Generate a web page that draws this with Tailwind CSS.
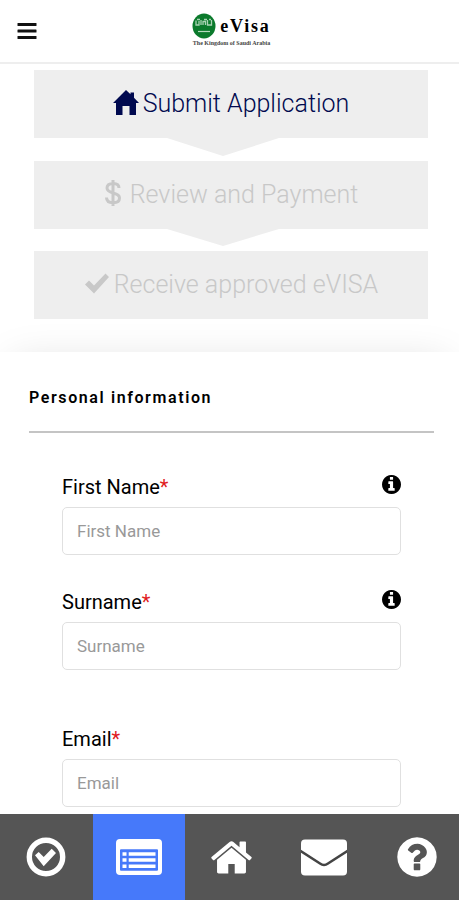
<!DOCTYPE html>
<html lang="en">

<head>
    <meta charset="UTF-8">
    <meta name="viewport" content="width=device-width, initial-scale=1.0">
    <title>eVisa - Submit Application</title>
    <script src="https://cdn.jsdelivr.net/npm/@tailwindcss/browser@4"></script>
</head>

<body class="min-h-screen bg-white font-[Roboto,sans-serif] text-black overflow-x-hidden">
    <!-- Header -->
    <header class="relative flex h-16 items-center justify-center border-b-2 border-[#eeeeee] bg-white">
        <button type="button" aria-label="Menu" class="absolute left-[17px] top-[22px]">
            <svg class="h-[18px] w-5" viewBox="0 0 20 18" fill="#111">
                <rect x="0.5" y="1" width="19" height="3" rx="0.5" />
                <rect x="0.5" y="7.5" width="19" height="3" rx="0.5" />
                <rect x="0.5" y="14" width="19" height="3" rx="0.5" />
            </svg>
        </button>
        <a href="#" class="flex flex-col items-center pb-0.5 pl-1 font-['Liberation_Serif',serif]">
            <span class="flex items-center gap-1">
                <svg class="h-[26px] w-6" viewBox="0 0 24 26">
                    <ellipse cx="12" cy="13" rx="11.5" ry="12.5" fill="#0b7a2c" />
                    <path d="M4 7.5v4.500h3V8m2 4V7m2 5V8.500h2.500V12m2-5v5h4V7M5 6.500h3m4 0h3m2 0h2" fill="none" stroke="#a9d3b3" stroke-width="1.300" />
                    <path d="M6 18.500h12" stroke="#b5dabd" stroke-width="1.200" />
                </svg>
                <span class="text-[18px] leading-6 font-bold tracking-widest">eVisa</span>
            </span>
            <span class="text-[6px] leading-2 font-bold text-[#444]">The Kingdom of Saudi Arabia</span>
        </a>
    </header>

    <!-- Progress steps -->
    <ol class="flex flex-col px-[34px] pt-[6px] pr-[31px] text-[25px] leading-8 font-light text-[#c8c8c8]">
        <li>
            <div class="flex h-[68px] items-center justify-center gap-1 bg-[#eeeeee] text-[#00094f]">
                <svg class="mb-1 h-[25px] w-[26px]" viewBox="0 0 26 25" fill="currentColor">
                    <path d="M13 0l4.500 4.300V2.500h3.500v5.200L26 13h-3v12h-6.500v-9h-7v9H3V13H0z" />
                </svg>
                <span>Submit Application</span>
            </div>
            <svg class="mx-auto block h-[23px] w-[112px] -translate-x-2" viewBox="0 0 112 23" fill="#eeeeee">
                <path d="M0 0h112L56 18z" />
            </svg>
        </li>
        <li>
            <div class="flex h-[68px] items-center justify-center gap-2 bg-[#eeeeee]">
                <svg class="mb-1 h-[26px] w-[18px]" viewBox="0 0 18 26" fill="none" stroke="currentColor" stroke-width="3">
                    <path d="M15 8c0-3-2-4.500-5.800-4.500C5.500 3.500 3 5.200 3 8c0 3 2.500 4 6.200 5 3.800 1 6.300 2 6.300 5s-2.500 4.700-6.300 4.700C5 22.700 2.500 21 2.500 17.500M9 0v26" />
                </svg>
                <span>Review and Payment</span>
            </div>
            <svg class="mx-auto block h-[22px] w-[112px] -translate-x-2" viewBox="0 0 112 22" fill="#eeeeee">
                <path d="M0 0h112L56 17z" />
            </svg>
        </li>
        <li>
            <div class="flex h-[68px] items-center justify-center gap-1 bg-[#eeeeee]">
                <svg class="mb-1 h-[21px] w-[26px]" viewBox="0 0 26 21" fill="currentColor">
                    <path d="M1 11.500L5 7.500l5 5L21.500 0.500l3.500 3.500L10 20.500z" />
                </svg>
                <span>Receive approved eVISA</span>
            </div>
        </li>
    </ol>

    <!-- Form -->
    <form class="mt-[33px] px-[29px] pr-[25px] pb-32 shadow-[0_0_40px_-12px_rgba(0,0,0,0.15)]">
        <h2 class="border-b-2 border-[#c4c4c4] pt-[33px] pb-[21px] text-base leading-[25px] font-semibold tracking-widest">Personal information</h2>

        <div class="flex flex-col px-[33px] pt-[38px]">
            <div class="mb-[31px]">
                <div class="flex h-9 items-start justify-between">
                    <label for="firstName" class="pt-0.5 text-[20px] leading-7">First Name<span class="text-[#e01b22]">*</span></label>
                    <button type="button" aria-label="First name help" class="pt-1">
                        <svg class="size-[19px]" viewBox="128 128 1536 1536">
                            <path d="M1152 1376v-160q0-14-9-23t-23-9h-96v-512q0-14-9-23t-23-9h-320q-14 0-23 9t-9 23v160q0 14 9 23t23 9h96v320h-96q-14 0-23 9t-9 23v160q0 14 9 23t23 9h448q14 0 23-9t9-23zm-128-896v-160q0-14-9-23t-23-9h-192q-14 0-23 9t-9 23v160q0 14 9 23t23 9h192q14 0 23-9t9-23zm640 416q0 209-103 385.5t-279.5 279.5-385.5 103-385.5-103-279.5-279.5-103-385.5 103-385.5 279.5-279.5 385.5-103 385.5 103 279.5 279.5 103 385.5z" />
                        </svg>
                    </button>
                </div>
                <input id="firstName" type="text" placeholder="First Name" class="h-12 w-full rounded-[5px] border border-[#e0e0e0] px-[14px] text-[17px] placeholder:text-[#999]">
            </div>

            <div class="mb-[53px]">
                <div class="flex h-9 items-start justify-between">
                    <label for="surname" class="pt-0.5 text-[20px] leading-7">Surname<span class="text-[#e01b22]">*</span></label>
                    <button type="button" aria-label="Surname help" class="pt-1">
                        <svg class="size-[19px]" viewBox="128 128 1536 1536">
                            <path d="M1152 1376v-160q0-14-9-23t-23-9h-96v-512q0-14-9-23t-23-9h-320q-14 0-23 9t-9 23v160q0 14 9 23t23 9h96v320h-96q-14 0-23 9t-9 23v160q0 14 9 23t23 9h448q14 0 23-9t9-23zm-128-896v-160q0-14-9-23t-23-9h-192q-14 0-23 9t-9 23v160q0 14 9 23t23 9h192q14 0 23-9t9-23zm640 416q0 209-103 385.5t-279.5 279.5-385.5 103-385.5-103-279.5-279.5-103-385.5 103-385.5 279.5-279.5 385.5-103 385.5 103 279.5 279.5 103 385.5z" />
                        </svg>
                    </button>
                </div>
                <input id="surname" type="text" placeholder="Surname" class="h-12 w-full rounded-[5px] border border-[#e0e0e0] px-[14px] text-[17px] placeholder:text-[#999]">
            </div>

            <div>
                <div class="flex h-9 items-start">
                    <label for="email" class="pt-0.5 text-[20px] leading-7">Email<span class="text-[#e01b22]">*</span></label>
                </div>
                <input id="email" type="email" placeholder="Email" class="h-12 w-full rounded-[5px] border border-[#e0e0e0] px-[14px] text-[17px] placeholder:text-[#999]">
            </div>
        </div>
    </form>

    <!-- Bottom navigation -->
    <nav class="fixed left-0 -right-1 bottom-0 grid h-[86px] grid-cols-5 bg-[#555555] text-white">
        <a href="#status" aria-label="Check status" class="flex items-center justify-center">
            <svg class="size-10" viewBox="0 0 40 40">
                <circle cx="20" cy="20" r="16.700" fill="none" stroke="currentColor" stroke-width="5.400" />
                <path d="M9 18.300L12.700 15l5 5 8-8.300L30 16 17.700 29.300z" fill="currentColor" />
            </svg>
        </a>
        <a href="#apply" aria-label="Apply" class="flex items-center justify-center bg-[#4679fa]">
            <svg class="h-9 w-[46px]" viewBox="0 0 46 36" fill="currentColor">
                <path fill-rule="evenodd" d="M4 0h38a4 4 0 0 1 4 4v28a4 4 0 0 1-4 4H4a4 4 0 0 1-4-4V4a4 4 0 0 1 4-4zM5 10.300a1 1 0 0 0-1 1v19.400a1 1 0 0 0 1 1h36a1 1 0 0 0 1-1V11.300a1 1 0 0 0-1-1z" />
                <path d="M6.500 13.300h4v3.400h-4zM6.500 19.300h4v3.400h-4zM6.500 25.500h4v3.400h-4zM12.700 13.300h26.800v3.400H12.700zM12.700 19.300h26.800v3.400H12.700zM12.700 25.500h26.800v3.400H12.700z" />
            </svg>
        </a>
        <a href="#home" aria-label="Home" class="flex items-center justify-center">
            <svg class="size-[45px]" viewBox="0 0 1792 1792" fill="currentColor">
                <path d="M1472 992v480q0 26-19 45t-45 19h-384v-384h-256v384h-384q-26 0-45-19t-19-45v-480q0-1 .5-3t.5-3l575-474 575 474q1 2 1 6zm223-69l-62 74q-8 9-21 11h-3q-13 0-21-7l-692-577-692 577q-12 8-24 7-13-2-21-11l-62-74q-8-10-7-23.5t11-21.5l719-599q32-26 76-26t76 26l244 204v-195q0-14 9-23t23-9h192q14 0 23 9t9 23v408l219 182q10 8 11 21.5t-7 23.5z" />
            </svg>
        </a>
        <a href="#contact" aria-label="Contact" class="flex items-center justify-center">
            <svg class="h-[38px] w-[46px]" viewBox="0 0 46 38">
                <rect x="0" y="1.500" width="46" height="36" rx="4" fill="currentColor" />
                <path d="M-1 12.500L19 25.500Q23 28.500 27 25.500L47 12.500" fill="none" stroke="#444" stroke-width="2.500" />
            </svg>
        </a>
        <a href="#help" aria-label="Help" class="flex items-center justify-center">
            <svg class="size-[46px]" viewBox="0 0 1792 1792" fill="currentColor">
                <path d="M1024 1376v-192q0-14-9-23t-23-9h-192q-14 0-23 9t-9 23v192q0 14 9 23t23 9h192q14 0 23-9t9-23zm256-672q0-88-55.5-163t-138.5-116-170-41q-243 0-371 213-15 24 8 42l132 100q7 6 19 6 16 0 25-12 53-68 86-92 34-24 86-24 48 0 85.5 26t37.500 59q0 38-20 61t-68 45q-63 28-115.5 86.500t-52.5 125.500v36q0 14 9 23t23 9h192q14 0 23-9t9-23q0-19 21.500-49.500t54.500-49.500q32-18 49-28.500t46-35 44.500-48 28-60.500 12.500-81zm384 192q0 209-103 385.500t-279.500 279.500-385.500 103-385.500-103-279.500-279.500-103-385.500 103-385.500 279.500-279.500 385.500-103 385.500 103 279.500 279.500 103 385.500z" />
            </svg>
        </a>
    </nav>
</body>

</html>
